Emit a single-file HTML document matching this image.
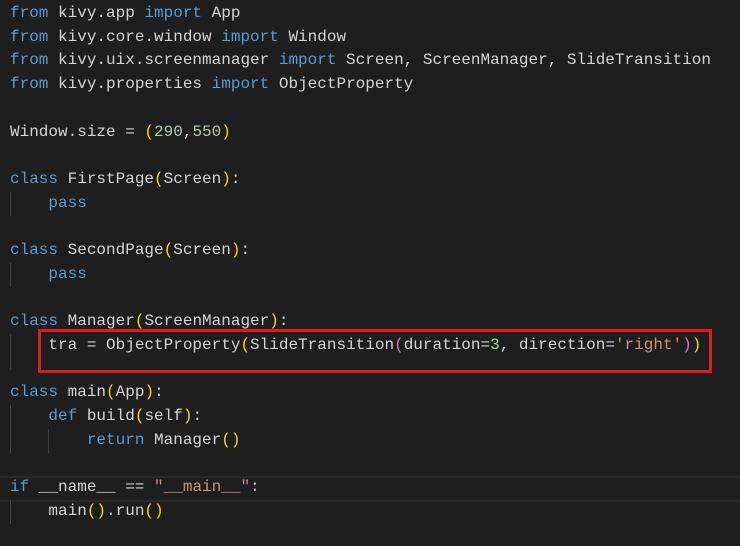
<!DOCTYPE html>
<html><head><meta charset="utf-8"><style>
html,body{margin:0;padding:0;background:#1e1e1e;width:740px;height:546px;overflow:hidden}
.c{position:absolute;left:10px;top:2px;font-family:"Liberation Mono",monospace;font-size:16px;line-height:23.7px;color:#d4d4d4;white-space:pre}
.k{color:#569cd6}.y{color:#ffd700}.p{color:#da70d6}.s{color:#ce9178}.n{color:#b5cea8}
.g{position:absolute;width:1px;background:#404040}
.hl{position:absolute;left:0;top:476px;width:740px;height:22px;border-top:2px solid #282828;border-bottom:2px solid #282828}
.box{position:absolute;left:38px;top:329px;width:668px;height:38px;border:3px solid #d91e1e}
</style></head><body>
<div class="hl"></div>
<div class="g" style="left:10px;top:192px;height:24px"></div>
<div class="g" style="left:10px;top:263px;height:24px"></div>
<div class="g" style="left:10px;top:334px;height:36px"></div>
<div class="g" style="left:10px;top:405px;height:48px"></div>
<div class="g" style="left:48px;top:429px;height:24px"></div>
<div class="g" style="left:10px;top:500px;height:24px"></div>
<div class="c"><span class="k">from</span> kivy.app <span class="k">import</span> App
<span class="k">from</span> kivy.core.window <span class="k">import</span> Window
<span class="k">from</span> kivy.uix.screenmanager <span class="k">import</span> Screen, ScreenManager, SlideTransition
<span class="k">from</span> kivy.properties <span class="k">import</span> ObjectProperty

Window.size = <span class="y">(</span><span class="n">290</span>,<span class="n">550</span><span class="y">)</span>

<span class="k">class</span> FirstPage<span class="y">(</span>Screen<span class="y">)</span>:
    <span class="k">pass</span>

<span class="k">class</span> SecondPage<span class="y">(</span>Screen<span class="y">)</span>:
    <span class="k">pass</span>

<span class="k">class</span> Manager<span class="y">(</span>ScreenManager<span class="y">)</span>:
    tra = ObjectProperty<span class="y">(</span>SlideTransition<span class="p">(</span>duration=<span class="n">3</span>, direction=<span class="s">'right'</span><span class="p">)</span><span class="y">)</span>

<span class="k">class</span> main<span class="y">(</span>App<span class="y">)</span>:
    <span class="k">def</span> build<span class="y">(</span>self<span class="y">)</span>:
        <span class="k">return</span> Manager<span class="y">()</span>

<span class="k">if</span> __name__ == <span class="s">"__main__"</span>:
    main<span class="y">()</span>.run<span class="y">()</span></div>
<div class="box"></div>
</body></html>
